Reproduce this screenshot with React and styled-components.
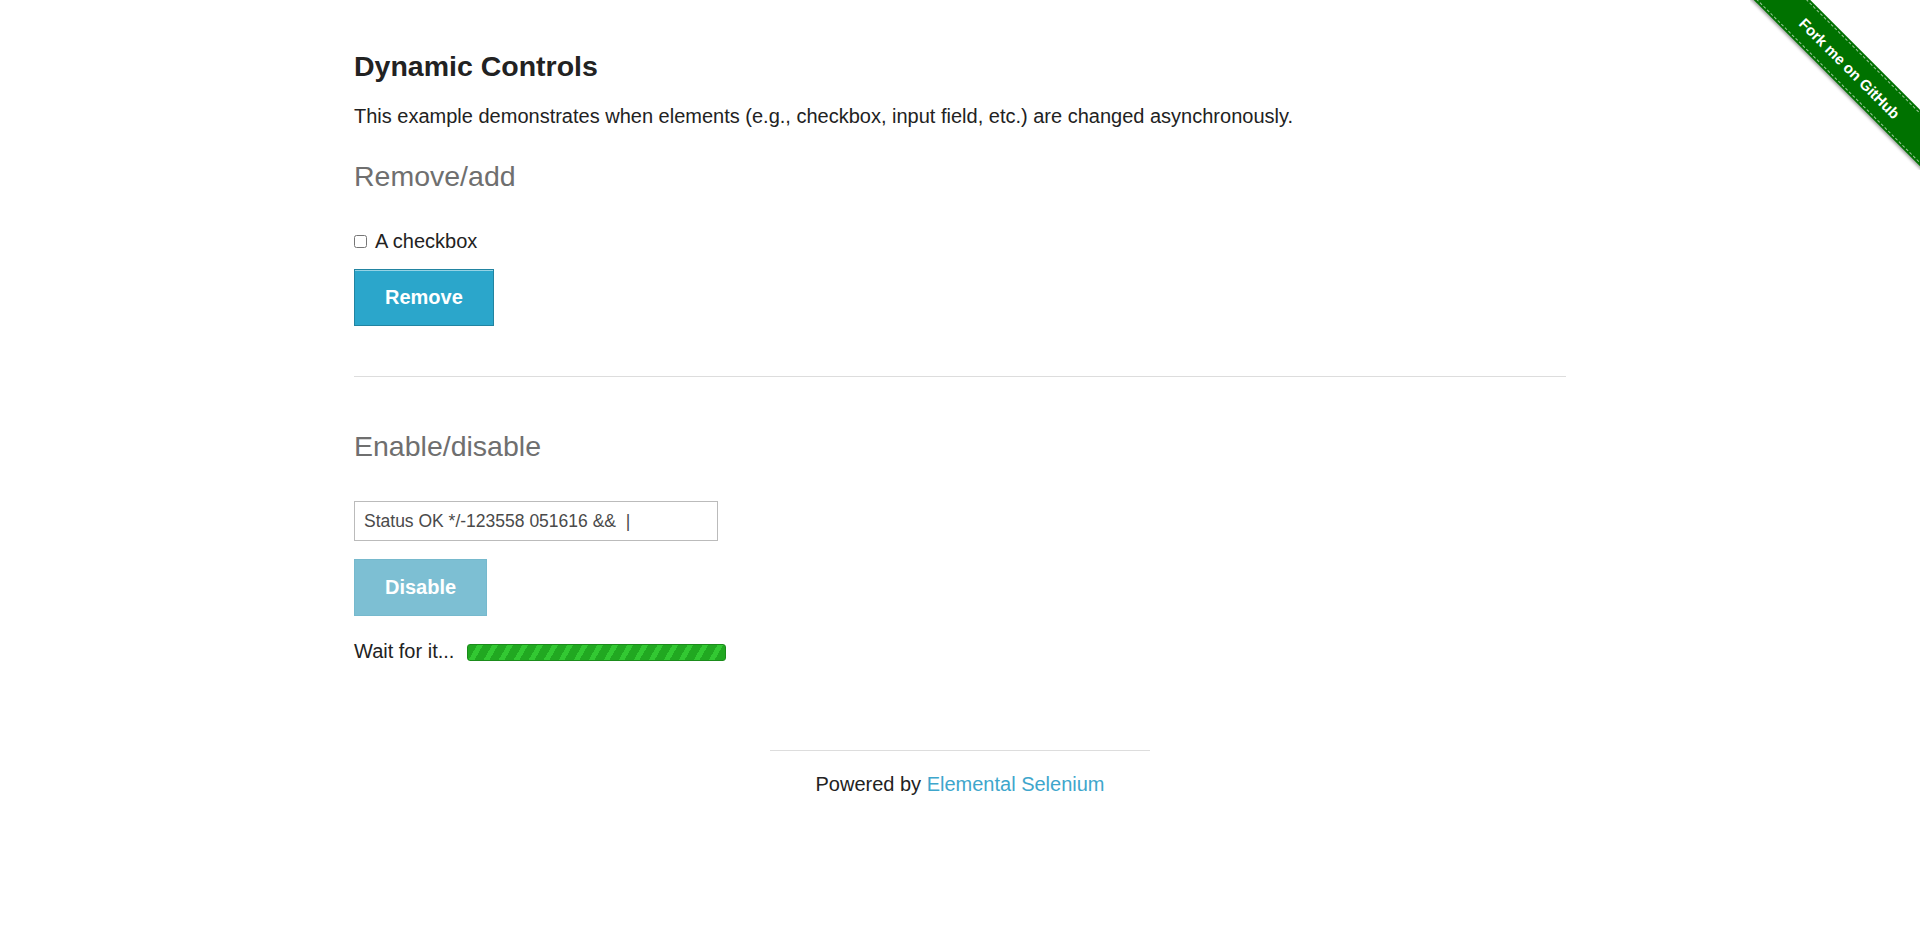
import React from 'react'
import styled, { createGlobalStyle } from 'styled-components'

const GlobalStyle = createGlobalStyle`
  body {
    margin: 0;
    background: #fff;
    color: #222;
    font-family: "Liberation Sans", Arial, sans-serif;
  }
`

const Page = styled.div`
  position: relative;
  min-height: 942px;
  overflow: hidden;
`

const Content = styled.div`
  width: 1212px;
  margin: 0 auto;
  display: flex;
  flex-direction: column;
  align-items: flex-start;
`

const Title = styled.h3`
  margin: 50px 0 0;
  font-size: 28.5px;
  line-height: 32px;
  font-weight: bold;
  color: #222;
`

const Lead = styled.p`
  margin: 22px 0 0;
  font-size: 20px;
  line-height: 24px;
`

const Subheader = styled.h4`
  margin: ${p => p.$top}px 0 0;
  font-size: 28.5px;
  line-height: 32px;
  font-weight: normal;
  color: #6f6f6f;
`

const CheckRow = styled.label`
  margin-top: 37px;
  display: flex;
  align-items: center;
  gap: 8px;
  font-size: 20px;
  line-height: 24px;

  input {
    margin: 0;
    width: 13px;
    height: 13px;
  }
`

const Button = styled.button`
  margin-top: ${p => p.$top}px;
  height: 57px;
  padding: 0 30px;
  font-family: inherit;
  font-size: 20px;
  font-weight: bold;
  color: #fff;
  background: ${p => (p.$disabled ? '#7dbfd3' : '#2ba6cb')};
  border: 1px solid ${p => (p.$disabled ? '#76b9cd' : '#2284a1')};
  box-shadow: ${p => (p.$disabled ? 'none' : 'inset 0 1px 0 rgba(255, 255, 255, 0.5)')};
  cursor: pointer;
`

const Divider = styled.hr`
  margin: 50px 0 0;
  width: 100%;
  border: 0;
  border-top: 1px solid #ddd;
`

const TextInput = styled.input`
  margin-top: 39px;
  box-sizing: border-box;
  width: 364px;
  height: 40px;
  padding: 0 9px;
  font-family: inherit;
  font-size: 17.5px;
  color: #4a4a4a;
  border: 1px solid #bbb;
  background: #fff;
  outline: none;
`

const WaitRow = styled.div`
  margin-top: 23px;
  display: flex;
  align-items: flex-start;
  gap: 13px;
  font-size: 20px;
  line-height: 24px;
`

const Progress = styled.div`
  margin-top: 5px;
  width: 259px;
  height: 17px;
  box-sizing: border-box;
  border: 1px solid #1b8c1b;
  border-radius: 3px;
  background: repeating-linear-gradient(
    120deg,
    #21a821 0px,
    #21a821 8px,
    #32c832 8px,
    #32c832 13px
  );
`

const Footer = styled.div`
  margin-top: 87px;
  display: flex;
  flex-direction: column;
  align-items: center;
`

const FooterRule = styled.hr`
  margin: 0;
  width: 380px;
  border: 0;
  border-top: 1px solid #ddd;
`

const FooterText = styled.div`
  margin-top: 21px;
  font-size: 20px;
  line-height: 24px;

  a {
    color: #3ea6cc;
    text-decoration: none;
  }
`

const RibbonCorner = styled.div`
  position: absolute;
  top: 0;
  right: 0;
  width: 170px;
  height: 170px;
  overflow: hidden;
`

const RibbonBand = styled.a`
  position: absolute;
  left: -30px;
  top: 48px;
  width: 260px;
  height: 40px;
  transform: rotate(45deg);
  background: #007200;
  box-shadow: 0 2px 3px rgba(0, 0, 0, 0.35);
  display: flex;
  align-items: center;
  justify-content: center;
  color: #fff;
  font-family: "Liberation Sans", Arial, sans-serif;
  font-weight: bold;
  font-size: 15px;
  text-decoration: none;

  &::before {
    content: '';
    position: absolute;
    left: 0;
    right: 0;
    top: 2px;
    bottom: 2px;
    border-top: 1px dashed rgba(255, 255, 255, 0.6);
    border-bottom: 1px dashed rgba(255, 255, 255, 0.6);
  }
`

export default function App() {
  return (
    <Page>
      <GlobalStyle />
      <Content>
        <Title>Dynamic Controls</Title>
        <Lead>
          This example demonstrates when elements (e.g., checkbox, input field, etc.) are changed asynchronously.
        </Lead>
        <Subheader $top={32}>Remove/add</Subheader>
        <CheckRow>
          <input type="checkbox" />
          A checkbox
        </CheckRow>
        <Button $top={16}>Remove</Button>
        <Divider />
        <Subheader $top={53}>Enable/disable</Subheader>
        <TextInput readOnly value="Status OK */-123558 051616 &&  |" />
        <Button $top={18} $disabled>Disable</Button>
        <WaitRow>
          Wait for it...
          <Progress />
        </WaitRow>
      </Content>
      <Footer>
        <FooterRule />
        <FooterText>
          Powered by <a href="#">Elemental Selenium</a>
        </FooterText>
      </Footer>
      <RibbonCorner>
        <RibbonBand href="#">Fork me on GitHub</RibbonBand>
      </RibbonCorner>
    </Page>
  )
}
